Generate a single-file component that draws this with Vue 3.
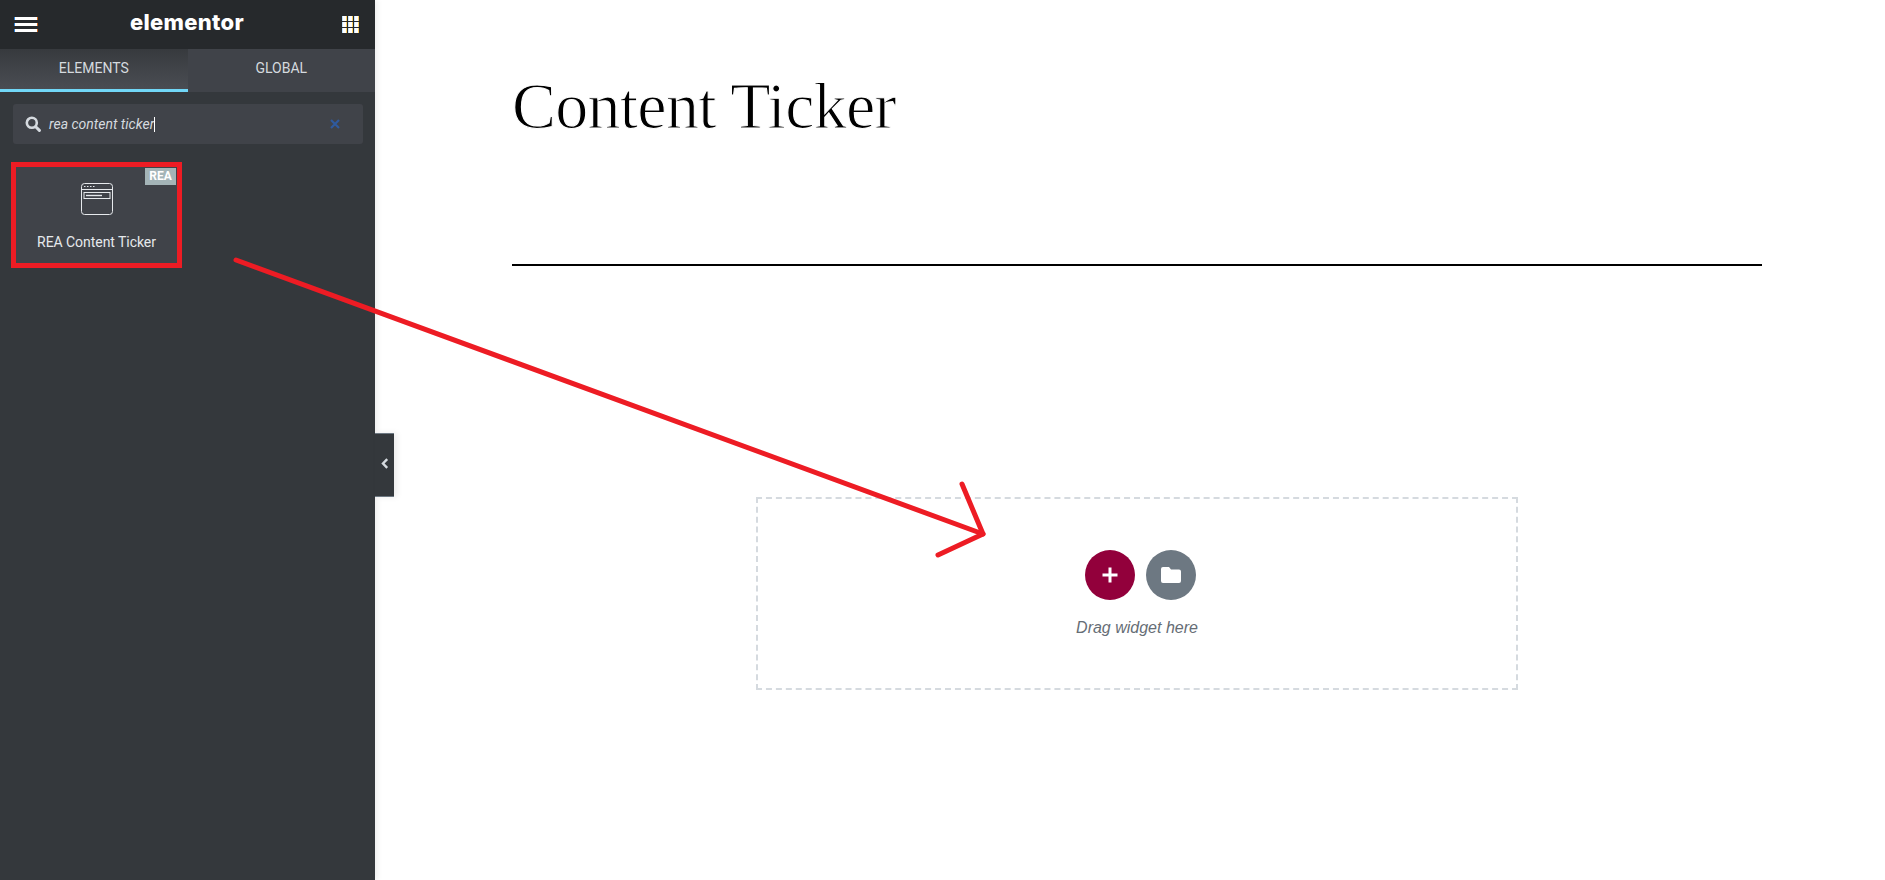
<script setup>
const tabs = [
  { name: "ELEMENTS", active: true },
  { name: "GLOBAL", active: false },
]
</script>

<template>
  <div class="editor">
    <aside class="panel">
      <header class="panel_header">
        <div class="burger"><i></i><i></i><i></i></div>
        <div class="logo">elementor</div>
        <div class="apps"><i v-for="n in 9" :key="n"></i></div>
      </header>

      <nav class="tabs">
        <div v-for="tab in tabs" :key="tab.name" class="tab" :class="{ active: tab.active }">{{ tab.name }}</div>
      </nav>

      <div class="search">
        <svg class="search_icon" width="16" height="16" viewBox="0 0 16 16">
          <circle cx="6.8" cy="6.8" r="5" fill="none" stroke="#d5dadf" stroke-width="2.6" />
          <path d="M10.7 10.7 L14.4 14.4" stroke="#d5dadf" stroke-width="3" stroke-linecap="round" />
        </svg>
        <span class="search_text">rea content ticker</span>
        <span class="caret"></span>
        <svg class="search_clear" width="10" height="10" viewBox="0 0 10 10">
          <path d="M1 1 L9 9 M9 1 L1 9" stroke="#2f5a9e" stroke-width="2.2" />
        </svg>
      </div>

      <div class="widget">
        <span class="badge">REA</span>
        <svg class="widget_icon" width="34" height="34" viewBox="0 0 34 34" fill="none" stroke="#e6e9ec" stroke-width="1">
          <rect x="1.5" y="1.5" width="31" height="31" rx="3" />
          <path d="M1.5 7.5 H32.5" />
          <rect x="4" y="10.5" width="26" height="6" />
          <path d="M6 13.5 H22" stroke-width="1.4" />
          <path d="M4 4.5 H5.5 M7 4.5 H8.5 M10 4.5 H11.5 M13 4.5 H14.5" />
        </svg>
        <div class="widget_name">REA Content Ticker</div>
      </div>

      <div class="collapse">
        <svg width="8" height="11" viewBox="0 0 8 11">
          <path d="M6.2 1.2 L2 5.5 L6.2 9.8" fill="none" stroke="#d5dadf" stroke-width="2.4" />
        </svg>
      </div>
    </aside>

    <main class="page">
      <h1 class="title">Content Ticker</h1>
      <div class="rule"></div>
      <section class="dropzone">
        <div class="buttons">
          <span class="round add">
            <svg width="16" height="16" viewBox="0 0 16 16">
              <path d="M8 .5 V15.5 M.5 8 H15.5" stroke="#fff" stroke-width="3" />
            </svg>
          </span>
          <span class="round folder">
            <svg width="20" height="16" viewBox="0 0 20 16">
              <path d="M2 0 H8 L10 2.5 H18 A2 2 0 0 1 20 4.5 V14 A2 2 0 0 1 18 16 H2 A2 2 0 0 1 0 14 V2 A2 2 0 0 1 2 0 Z" fill="#fff" />
            </svg>
          </span>
        </div>
        <div class="drag_text">Drag widget here</div>
      </section>
    </main>

    <svg class="annotation" width="1885" height="880" viewBox="0 0 1885 880" fill="none" stroke="#ed1c24" stroke-width="5" stroke-linecap="round" stroke-linejoin="round">
      <path d="M236 260 L983 534" />
      <path d="M962 484 L983 534 L938 555" />
    </svg>
  </div>
</template>

<style>
html, body {
  margin: 0;
  overflow: hidden;
  background: #fff;
}
</style>

<style scoped>
.editor {
  position: relative;
  display: flex;
  width: 1885px;
  height: 880px;
  overflow: hidden;
  font-family: Roboto, "Liberation Sans", sans-serif;
}

/* left panel */
.panel {
  position: relative;
  flex: 0 0 375px;
  box-sizing: border-box;
  background: #34383c;
  box-shadow: 2px 0 6px rgba(0, 0, 0, .08);
  z-index: 1;
}
.panel_header {
  display: flex;
  align-items: center;
  justify-content: space-between;
  height: 49px;
  padding: 0 16px 0 14px;
  box-sizing: border-box;
  background: #26292c;
}
.burger {
  display: flex;
  flex-direction: column;
  gap: 3px;
  width: 24px;
}
.burger i {
  display: block;
  height: 3px;
  background: #fff;
  border-left: 1px solid #2a7fd6;
  border-right: 1px solid #c8641e;
}
.logo {
  color: #fff;
  font-family: Inter, sans-serif;
  font-size: 22px;
  font-weight: 800;
  line-height: 49px;
  letter-spacing: .3px;
  margin: -5px 0 0 -6px;
}
.apps {
  display: grid;
  grid-template-columns: repeat(3, 5px);
  grid-auto-rows: 5px;
  gap: 1px;
}
.apps i {
  display: block;
  background: linear-gradient(90deg, #bfe3ff 20%, #fff 20%, #fff 80%, #ffd060 80%);
}

.tabs {
  display: flex;
  height: 43px;
}
.tab {
  flex: 1;
  box-sizing: border-box;
  height: 43px;
  padding-top: 11px;
  text-align: center;
  font-size: 14px;
  line-height: 16px;
  color: #d5dadf;
  background: #404349;
}
.tab.active {
  background: linear-gradient(#373a3e, #4a4d53);
  border-bottom: 3px solid #71d7f7;
}

.search {
  display: flex;
  align-items: center;
  box-sizing: border-box;
  width: 350px;
  height: 40px;
  margin: 12px 0 0 13px;
  padding: 0 23px 0 12px;
  border-radius: 3px;
  background: #404349;
}
.search_text {
  margin-left: 8px;
  font-size: 14px;
  font-style: italic;
  color: #d5dadf;
}
.caret {
  width: 1px;
  height: 15px;
  background: #fff;
}
.search_clear {
  margin-left: auto;
}

.widget {
  position: relative;
  box-sizing: border-box;
  width: 171px;
  height: 106px;
  margin: 18px 0 0 11px;
  padding-top: 15px;
  border: 5px solid #ed1c24;
  background: #404349;
  text-align: center;
}
.badge {
  position: absolute;
  top: 1px;
  right: 1px;
  width: 31px;
  height: 17px;
  background: #a4b4b7;
  color: #fff;
  font-size: 12px;
  font-weight: 700;
  line-height: 17px;
}
.widget_icon {
  display: block;
  margin: 0 auto;
}
.widget_name {
  margin-top: 18px;
  font-size: 14px;
  line-height: 16px;
  letter-spacing: -.05px;
  color: #e6e9ec;
}

.collapse {
  position: absolute;
  top: 433px;
  left: 375px;
  display: flex;
  align-items: center;
  justify-content: center;
  width: 19px;
  height: 64px;
  padding-bottom: 4px;
  box-sizing: border-box;
  background: #34383c;
  border-top: 1px solid #6d7882;
  border-bottom: 1px solid #6d7882;
  box-shadow: 3px 0 6px rgba(0, 0, 0, .08);
}

/* page */
.page {
  flex: 1;
  padding: 0 123px 0 137px;
}
.title {
  margin: 0;
  padding-top: 67px;
  font-family: "Liberation Serif", serif;
  font-size: 66px;
  font-weight: 400;
  line-height: 78px;
  letter-spacing: -.75px;
  color: #000;
  -webkit-text-stroke: 1.1px #fff;
}
.rule {
  height: 2px;
  margin-top: 119px;
  background: #000;
}
.dropzone {
  box-sizing: border-box;
  width: 762px;
  height: 193px;
  margin: 231px auto 0;
  padding-top: 51px;
  border: 2px dashed #d5dadf;
  text-align: center;
}
.buttons {
  display: flex;
  justify-content: center;
  gap: 11px;
  padding-left: 6px;
}
.round {
  display: flex;
  align-items: center;
  justify-content: center;
  width: 50px;
  height: 50px;
  border-radius: 50%;
}
.add {
  background: #92003b;
}
.folder {
  background: #6d7882;
}
.drag_text {
  margin-top: 18px;
  font-family: "Liberation Sans", sans-serif;
  font-size: 16px;
  font-style: italic;
  line-height: 20px;
  color: #666d75;
}

.annotation {
  position: absolute;
  top: 0;
  left: 0;
  z-index: 2;
  pointer-events: none;
}
</style>
